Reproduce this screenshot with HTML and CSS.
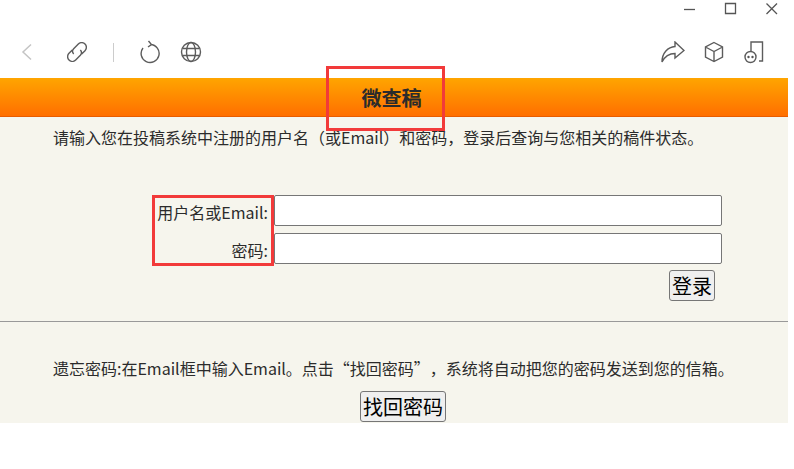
FILE: index.html
```html
<!DOCTYPE html>
<html lang="zh-CN">
<head>
    <meta charset="UTF-8">
    <title>微查稿</title>
    <link rel="stylesheet" href="styles.css">
</head>
<body>
<div class="titleBar">
    <svg class="winIcon" width="14" height="14" viewBox="0 0 14 14"><path d="M1 7.500h11"/></svg>
    <svg class="winIcon" width="14" height="14" viewBox="0 0 14 14"><path d="M1.500 1.500h10v10h-10z"/></svg>
    <svg class="winIcon" width="14" height="14" viewBox="0 0 14 14"><path d="M1.500 1.500l10.500 10.500M12 1.500l-10.500 10.500"/></svg>
</div>
<div class="toolBar">
    <div class="toolLeft">
        <svg class="backIcon" width="12" height="18" viewBox="0 0 12 18"><path d="M10 1.500l-8 7.500 8 7.500"/></svg>
        <svg class="tool linkIcon" width="20" height="20" viewBox="3.500 3.500 15 15"><path d="M8.500 12.500a3 3 0 0 1 0-4l3.500-3.500a3.500 3.500 0 0 1 5 5l-2.500 2.500M13.500 9.500a3 3 0 0 1 0 4l-3.500 3.500a3.500 3.500 0 0 1-5-5l2.500-2.500"/></svg>
        <span class="toolSep"></span>
        <svg class="tool reloadIcon" width="22" height="24" viewBox="0 0 22 24"><path d="M11.500 4.500a9 9 0 1 1-7.500 3.500M9.500 1l3 3.500-3.500 2.500"/></svg>
        <svg class="tool globeIcon" width="22" height="22" viewBox="0 0 22 22"><circle cx="11" cy="11" r="9.500"/><ellipse cx="11" cy="11" rx="4.500" ry="9.500"/><path d="M2.500 7.500h17M2.500 14.500h17"/></svg>
    </div>
    <div class="toolRight">
        <svg class="tool" width="24" height="22" viewBox="0 0 24 22"><path d="M1 21C1 12 7 6 14 5.500V1l9 8.500-9 7.500v-4.500C9 12.500 4 15 1 21z"/></svg>
        <svg class="tool" width="20" height="22" viewBox="0 0 20 22"><path d="M10 1.500l8.500 4.500v10l-8.500 4.500-8.500-4.500v-10zM1.500 6l8.500 4.500 8.500-4.500M10 10.500v10"/></svg>
        <svg class="tool" width="22" height="24" viewBox="0 0 22 24"><path d="M8 11V2h11.500v19H16"/><circle cx="7.500" cy="17" r="5.500"/><circle class="dot" cx="5.500" cy="17" r="1.200"/><circle class="dot" cx="9.500" cy="17" r="1.200"/></svg>
    </div>
</div>

<div class="wrapper">
    <div class="header">微查稿</div>
    <p class="intro">请输入您在投稿系统中注册的用户名（或Email）和密码，登录后查询与您相关的稿件状态。</p>
    <form class="loginForm">
        <label class="loginLabel">用户名或Email:</label>
        <input class="loginInput" type="text">
        <label class="loginLabel">密码:</label>
        <input class="loginInput" type="password">
        <div class="loginAction"><input class="btn" type="button" value="登录"></div>
    </form>
    <hr class="line">
    <p class="forgot">遗忘密码:在Email框中输入Email。点击“找回密码”，系统将自动把您的密码发送到您的信箱。</p>
    <div class="forgotAction"><input class="btn" type="button" value="找回密码"></div>

    <div class="mark markTitle"></div>
    <div class="mark markLabels"></div>
</div>
</body>
</html>
```

FILE: styles.css
```css
body{
    margin: 0;
    background-color: white;
    font-family: "Noto Sans CJK SC", "Noto Sans", sans-serif;
    font-size: 16px;
    font-kerning: none;
    font-feature-settings: "palt" 0, "chws" 0;
    text-spacing-trim: space-all;
    color: #2b2b2b;
}
.titleBar{
    height: 18px;
    display: flex;
    justify-content: flex-end;
    gap: 27px;
    padding-top: 2px;
    padding-right: 15px;
}
.winIcon path{
    fill: none;
    stroke: #555;
    stroke-width: 1.3;
}
.toolBar{
    height: 58px;
    display: flex;
    justify-content: space-between;
    align-items: center;
    padding: 6px 29px 0 21px;
    box-sizing: border-box;
}
.toolLeft, .toolRight{
    display: flex;
    align-items: center;
}
.toolRight{
    gap: 19px;
}
.backIcon path{
    fill: none;
    stroke: #c4c4c4;
    stroke-width: 1.5;
}
.tool{
    fill: none;
    stroke: #5c5c5c;
    stroke-width: 1.4;
}
.linkIcon{
    margin-left: 34px;
    stroke-width: 1.05;
}
.tool .dot{
    fill: #555;
    stroke: none;
}
.toolSep{
    width: 1px;
    height: 19px;
    margin: 0 25px 0 26px;
    background-color: #ccc;
}
.globeIcon{
    margin-left: 19px;
}
.wrapper{
    position: relative;
    width: 788px;
    height: 345px;
    background-color: #f6f5ed;
}
.header{
    height: 38px;
    border-bottom: 1px solid #e85c00;
    padding-right: 5px;
    background: linear-gradient(#ffa500, #ff6f00);
    text-align: center;
    font-size: 20px;
    font-weight: bold;
    line-height: 39px;
}
.intro, .forgot{
    margin: 0;
    padding-left: 53px;
    line-height: 20px;
    white-space: nowrap;
}
.intro{
    padding-top: 10px;
}
.loginForm{
    display: grid;
    grid-template-columns: 268px 448px;
    row-gap: 7px;
    margin-top: 48px;
    padding-left: 6px;
}
.loginLabel{
    height: 31px;
    padding-right: 6px;
    text-align: right;
    line-height: 35px;
}
.loginInput{
    box-sizing: border-box;
    width: 448px;
    height: 31px;
    border: 1px solid #767676;
    border-radius: 2px;
    background-color: white;
}
.loginAction{
    grid-column: 2;
    margin-top: -1px;
    padding-right: 7px;
    text-align: right;
}
.btn{
    height: 31px;
    padding: 0 2px;
    border: 1px solid #767676;
    border-radius: 3px;
    background-color: #efefef;
    color: black;
    font-family: inherit;
    font-size: 20px;
}
.line{
    margin: 20px 0 0 0;
    border: 0;
    border-top: 1px solid #999;
}
.forgot{
    padding-top: 36px;
}
.forgotAction{
    margin-top: 13px;
    padding-left: 18px;
    text-align: center;
}
.mark{
    position: absolute;
    box-sizing: border-box;
    border: 3px solid #f23a3a;
}
.markTitle{
    left: 326px;
    top: -12px;
    width: 119px;
    height: 65px;
}
.markLabels{
    left: 152px;
    top: 117px;
    width: 122px;
    height: 71px;
}
```
